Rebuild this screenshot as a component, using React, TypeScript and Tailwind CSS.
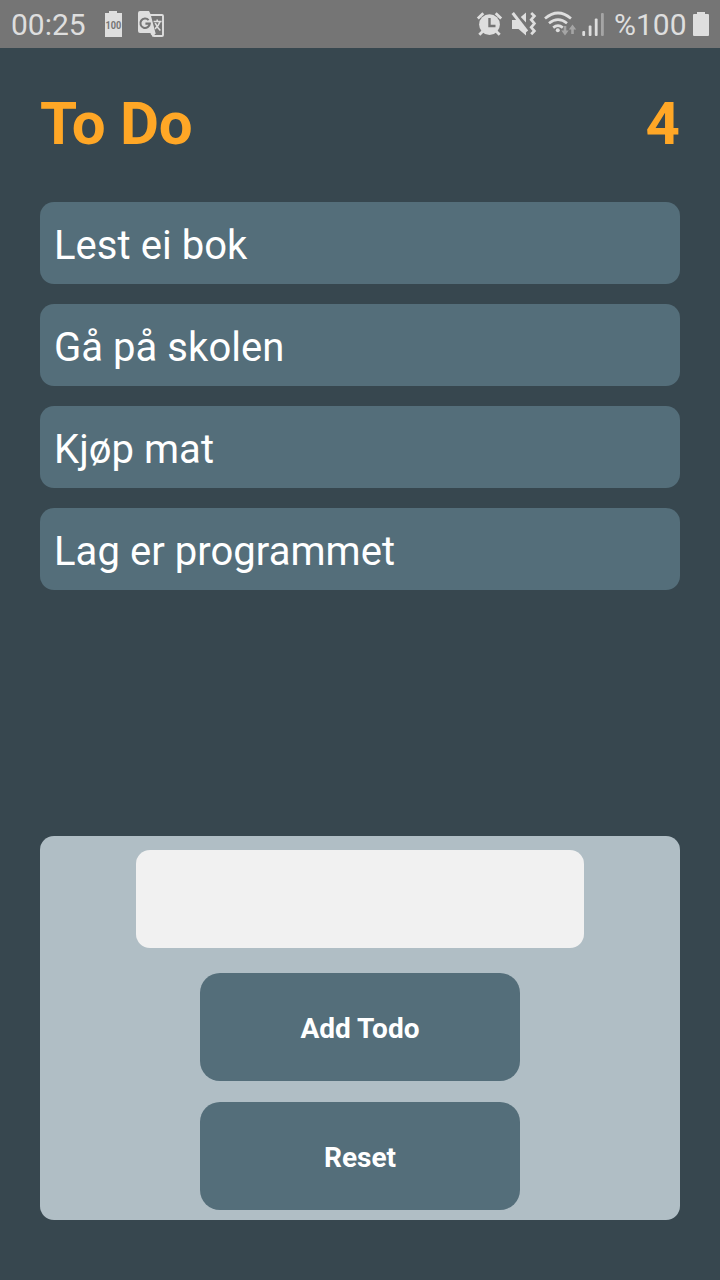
const todos = ["Lest ei bok", "Gå på skolen", "Kjøp mat", "Lag er programmet"];

function StatusBar() {
  return (
    <header className="flex h-12 shrink-0 items-center justify-between bg-[#757575] pl-[11px] pr-[11px] text-[30px] leading-[48px] text-[#dedede]">
      <div className="flex items-center">
        <span className="w-[76px] whitespace-nowrap pt-px">00:25</span>
        <svg className="ml-[18px] h-12 w-[17px]" viewBox="105 0 17 48" fill="#dedede">
          <path d="M105 13h4v-2h8v2h5v24h-17z" />
          <text x="105.6" y="29.2" fontSize="10" fontWeight="700" textLength="15.8" lengthAdjust="spacingAndGlyphs" fill="#757575" fontFamily="Roboto, sans-serif">100</text>
        </svg>
        <svg className="ml-4 h-12 w-[26px]" viewBox="138 0 26 48">
          <path d="M150 15h12q1 0 1 1v19q0 1-1 1h-8l-3-3" fill="none" stroke="#dedede" strokeWidth="1.9" />
          <path d="M140 11h9l1.5 3 5 19h-15.5q-2 0-2-2v-18q0-2 2-2zM151 33h5l-3.5 4z" fill="#dedede" />
          <path d="M148.6 20.1a4.7 4.7 0 1 0 1.2 3.5h-4.4" fill="none" stroke="#757575" strokeWidth="2.1" />
          <path d="M153.6 21.5h8M157.2 19.5v2M160 21.8q-1.3 4-5 7M155.2 23q2 4.5 5.2 7.5" fill="none" stroke="#dedede" strokeWidth="1.6" />
        </svg>
      </div>
      <div className="flex items-center">
        <svg className="h-12 w-[129px]" viewBox="476 0 129 48" fill="none" stroke="#dedede">
          <circle cx="489.5" cy="24.6" r="10.4" fill="#dedede" stroke="none" />
          <path d="M477.8 18.5l5.5-5.2M501.2 18.5l-5.5-5.2M482.8 31.2l-3.5 3.6M496.2 31.2l3.5 3.6" strokeWidth="2.8" />
          <path d="M489.5 18v8h6" stroke="#757575" strokeWidth="2.4" />
          <path d="M512 20h5l9 9v6.5l-7.5-6.5h-6.5zM526 12.5v10l-5.2-5.5z" fill="#dedede" stroke="none" />
          <path d="M512.7 13l14.3 18.5" strokeWidth="3" />
          <path d="M531.2 13l3.2 3-3.2 3.7 3.2 3.8-3.2 3.8 3.2 3.7-3.2 3.3" strokeWidth="2.7" />
          <path d="M545 18.5q13-11 26 0M549 23.3q9-7.4 18 0M553.2 27.6q4.8-3.8 9.6 0" strokeWidth="2.7" />
          <circle cx="557.8" cy="30.2" r="2" fill="#dedede" stroke="none" />
          <path d="M565 27v6M572.5 35v-6" stroke="#a5a5a5" strokeWidth="2.6" transform="translate(0 -1)" />
          <path d="M561.3 30.5h7.4l-3.7 5zM568.8 29.5h7.4l-3.7-5z" fill="#a5a5a5" stroke="none" />
          <g stroke="none" fill="#dedede">
            <rect x="582.3" y="31" width="2.8" height="5" rx="1" />
            <rect x="588.7" y="25.5" width="2.8" height="10.5" rx="1" />
            <rect x="594.8" y="18.5" width="2.8" height="17.5" rx="1" />
            <rect x="601" y="13" width="2.8" height="23" rx="1" fill="#a5a5a5" />
          </g>
        </svg>
        <span className="ml-[9px] w-[73px] whitespace-nowrap pt-px">%100</span>
        <svg className="ml-[6px] h-12 w-4" viewBox="693 0 16 48" fill="#dedede">
          <path d="M694 14h3v-2h8v2h3q1 0 1 1v20q0 1-1 1h-14q-1 0-1-1V15q0-1 1-1z" />
        </svg>
      </div>
    </header>
  );
}

export default function App() {
  return (
    <div className="flex h-[1280px] w-[720px] flex-col overflow-hidden bg-[#37474f] font-[Roboto,sans-serif] text-white">
      <StatusBar />
      <main className="flex flex-1 flex-col px-10 pb-[60px]">
        <div className="flex h-[154px] items-center justify-between pb-0.5 text-[60px] font-bold leading-[70px] text-[#ffa726]">
          <h1 className="tracking-[-0.3px]">To Do</h1>
          <span>4</span>
        </div>
        <ul className="flex flex-col gap-5">
          {todos.map((todo) => (
            <li key={todo} className="flex h-[82px] items-center rounded-[14px] bg-[#546e7a] px-3.5 pt-[5px] text-[40px] leading-[47px] tracking-[0.05px]">
              {todo}
            </li>
          ))}
        </ul>
        <form className="mt-auto flex h-[384px] flex-col items-center rounded-[14px] bg-[#b0bec5] pt-3.5" onSubmit={(e) => e.preventDefault()}>
          <input aria-label="Todo" className="h-[98px] w-[448px] rounded-[14px] bg-[#f1f1f1] px-4 text-[40px] text-[#37474f] outline-none" />
          <button type="submit" className="mt-[25px] h-[108px] w-80 rounded-[20px] bg-[#546e7a] pt-1 text-[28px] font-bold">
            Add Todo
          </button>
          <button type="button" className="mt-[21px] h-[108px] w-80 rounded-[20px] bg-[#546e7a] pt-1 text-[28px] font-bold">
            Reset
          </button>
        </form>
      </main>
    </div>
  );
}
